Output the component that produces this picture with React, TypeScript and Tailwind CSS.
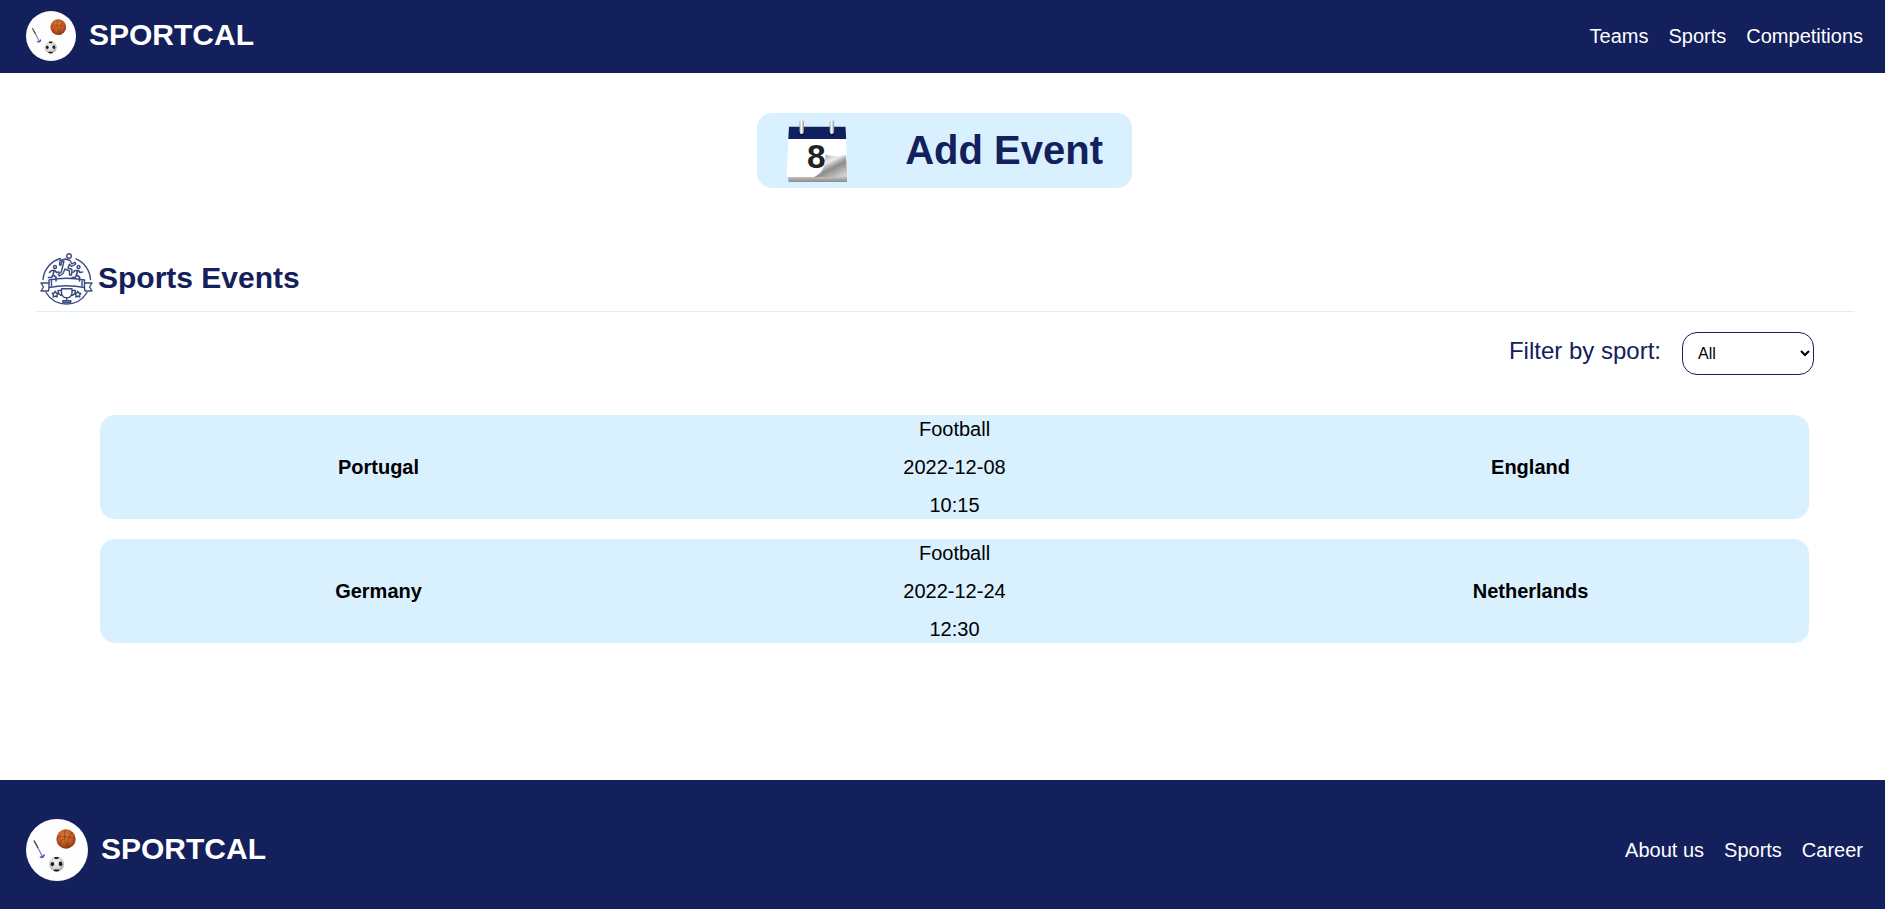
import React from "react";

function Logo({ className }: { className: string }) {
  return (
    <svg viewBox="0 0 62 62" className={className} aria-hidden="true">
      <defs>
        <radialGradient id="basketball" cx="0.45" cy="0.35" r="0.65">
          <stop offset="0" stopColor="#e07c3c" />
          <stop offset="0.6" stopColor="#c25a20" />
          <stop offset="1" stopColor="#8a3510" />
        </radialGradient>
        <radialGradient id="football" cx="0.45" cy="0.4" r="0.6">
          <stop offset="0" stopColor="#f4f4f4" />
          <stop offset="0.7" stopColor="#d4d4d6" />
          <stop offset="1" stopColor="#9a9a9c" />
        </radialGradient>
      </defs>
      <circle cx="31" cy="31" r="31" fill="#fefefe" />
      <circle cx="40" cy="20" r="9.7" fill="url(#basketball)" />
      <path d="M31 19q7 -4 18 1M39 10.500q-2 9 3 19M46 13q-5 6 -4 16M33 26q2 -6 7 -8" fill="none" stroke="#7c3213" strokeWidth="0.6" />
      <path d="M8 21.5L12 29" stroke="#3c3a48" strokeWidth="1.4" />
      <path d="M12 29L17 38.5" stroke="#8780c4" strokeWidth="1.4" />
      <path d="M14 37.5q2.500 2.500 4.500 -2" fill="none" stroke="#5547ae" strokeWidth="1.600" />
      <circle cx="30.500" cy="45" r="7.500" fill="url(#football)" />
      <path d="M28 38.200l5 -0.300l-1 2.200h-3zM25 43.500l2.500 -0.500l0.800 2.500l-1.800 2l-2 -1.500zM33 43l2.500 -0.500l1 3l-1.500 2l-2.200 -1.500zM28.500 50.500h4l1 1.600l-3 0.500l-3 -0.600z" fill="#1c1c1e" />
    </svg>
  );
}

function CalendarIcon() {
  return (
    <svg viewBox="0 0 62 64" className="h-16 w-[62px] shrink-0" aria-hidden="true">
      <defs>
        <linearGradient id="ring" x1="0" x2="1" y1="0" y2="0">
          <stop offset="0" stopColor="#a3a5aa" />
          <stop offset="0.45" stopColor="#ffffff" />
          <stop offset="1" stopColor="#8b8d92" />
        </linearGradient>
        <linearGradient id="curl" x1="0.25" x2="0.85" y1="0.15" y2="0.95">
          <stop offset="0" stopColor="#b5b5b5" />
          <stop offset="0.25" stopColor="#ededed" />
          <stop offset="0.42" stopColor="#b0b0b0" />
          <stop offset="0.55" stopColor="#8c8c8c" />
          <stop offset="1" stopColor="#d0d0d0" />
        </linearGradient>
        <linearGradient id="stack" x1="0" x2="0" y1="0" y2="1">
          <stop offset="0" stopColor="#c6c6c6" />
          <stop offset="0.6" stopColor="#a2a2a2" />
          <stop offset="1" stopColor="#8c8c8c" />
        </linearGradient>
      </defs>
      <path d="M2 57.500h59v5.500h-58.500z" fill="url(#stack)" />
      <path d="M2.500 19h57.500l1.500 39h-61z" fill="#fff" />
      <path d="M3 7.800h56.500l0.700 12.200h-57.900z" fill="#10205f" />
      <text x="30.300" y="49" textAnchor="middle" fontFamily="Liberation Sans, sans-serif" fontWeight="700" fontSize="33.500" fill="#222">8</text>
      <path d="M60 36l1.300 22h-33.300c7 -2.500 11.500 -9 11.500 -22.500c5 2.200 14 2.200 20.500 0.500z" fill="url(#curl)" />
      <ellipse cx="15.700" cy="14.200" rx="2.900" ry="2.400" fill="#081240" />
      <ellipse cx="45.900" cy="14.200" rx="2.900" ry="2.400" fill="#081240" />
      <rect x="13.500" y="1" width="4.400" height="14" rx="2.200" fill="url(#ring)" />
      <rect x="43.700" y="1" width="4.400" height="14" rx="2.200" fill="url(#ring)" />
    </svg>
  );
}

function Star({ x }: { x: number }) {
  return (
    <path
      transform={`translate(${x} 41.300)`}
      strokeWidth="1.500"
      d="M0 -3l1 1.600l2 0.500l-1.200 1.500l0.100 2l-1.900 -0.700l-1.900 0.700l0.100 -2l-1.200 -1.500l2 -0.500z"
    />
  );
}

function SmallRunner({ x }: { x: number }) {
  return (
    <g transform={`translate(${x} 12)`}>
      <circle cx="1" cy="2" r="1.500" />
      <path d="M-4.500 7.500l2 -2l3.500 0l1.500 2l2.500 -0.500M0 5.500l-1 4.500l3 2l0 4M-1 10l-1.500 2.500h-3" strokeWidth="1.600" />
    </g>
  );
}

function EventsIcon() {
  return (
    <svg
      viewBox="0 0 53 53"
      className="size-[53px] shrink-0"
      fill="none"
      stroke="#3a4980"
      strokeWidth="1.400"
      strokeLinejoin="round"
      strokeLinecap="round"
      aria-hidden="true"
    >
      <path d="M3 26.500A24 24 0 0 1 20.500 5.500M36 5.800A24 24 0 0 1 50.500 26.500M6 39.500A24 24 0 0 0 47 39.500" />
      <circle cx="29" cy="3" r="2.300" />
      <path d="M19.500 12l0.500 -4.500l5.500 -1.500l4.500 1.500l1.800 3.300l3.200 -1.500l0.800 1.700l-4.200 2.500l-2.300 -2.200l-1.300 3.700l4 1.500l-0.500 5.500h-2v-4l-4.500 -2l-2 4.500l-3.500 2.500l-1.200 -1.700l3 -2.300l1.900 -7.500l0.800 -3.300l-2.300 0.500l-0.700 3.300z" />
      <SmallRunner x={14} />
      <SmallRunner x={37.500} />
      <path d="M9 27q17.500 -3.500 35.500 0v7.500q-18 -3.500 -35.500 0z" />
      <path d="M9 30h-8l2.500 4l-2.500 4h7.500l0.500 -3M44.500 30h7.500l-2.500 4l2.500 4h-7l-0.500 -3M11.500 28v4.800M42 28v4.800" />
      <path d="M21.500 35.800h10.500v4c0 3 -2.500 5 -5.200 5s-5.300 -2 -5.300 -5zM21.500 37.500h-3.500q0 4.500 4.500 5M32 37.500h3.500q0 4.500 -4.500 5M26.700 45v2.500M22.800 47.600h8v1.600h-8z" />
      <Star x={15.2} />
      <Star x={37.800} />
    </svg>
  );
}

const events = [
  { home: "Portugal", sport: "Football", date: "2022-12-08", time: "10:15", away: "England" },
  { home: "Germany", sport: "Football", date: "2022-12-24", time: "12:30", away: "Netherlands" },
];

function NavLinks({ items }: { items: string[] }) {
  return (
    <nav className="flex gap-5 text-[20px] leading-[23px]">
      {items.map((item) => (
        <a key={item} href="#">{item}</a>
      ))}
    </nav>
  );
}

export default function App() {
  return (
    <div className="flex h-[909px] flex-col overflow-hidden bg-white font-['Liberation_Sans',Arial,sans-serif] text-black">
      <header className="flex h-[73px] shrink-0 items-center justify-between bg-[#13205b] pr-[22px] pl-[26px] text-white">
        <div className="flex items-center gap-[13px] pb-px">
          <Logo className="size-[50px]" />
          <span className="pb-[2px] text-[30px] leading-[34px] font-bold">SPORTCAL</span>
        </div>
        <NavLinks items={["Teams", "Sports", "Competitions"]} />
      </header>

      <main className="flex flex-1 flex-col">
        <button className="mt-10 ml-[757px] flex h-[75px] w-[375px] items-center justify-between rounded-[15px] bg-[#d9f0ff] pr-[29px] pl-[29px] text-[#13205b]">
          <CalendarIcon />
          <span className="pb-[2px] text-[40px] leading-[46px] font-bold">Add Event</span>
        </button>

        <div className="mt-[60px] mr-[31px] ml-[35px] flex h-16 items-center gap-[5px] border-b border-[#d9f0ff] pb-px pl-[5px] text-[#13205b]">
          <EventsIcon />
          <h2 className="pb-[2px] text-[30px] leading-[34px] font-bold">Sports Events</h2>
        </div>

        <div className="mt-5 mr-[71px] flex h-[43px] items-center justify-end gap-[21px]">
          <label htmlFor="sport" className="pb-1.5 text-[24px] leading-[27px] text-[#13205b]">Filter by sport:</label>
          <select id="sport" className="h-[43px] w-[132px] rounded-[15px] border border-[#13205b] bg-white px-[11px] text-[16px] text-black">
            <option>All</option>
            <option>Football</option>
          </select>
        </div>

        <div className="mt-10 mr-[76px] ml-[100px] flex flex-col gap-5">
          {events.map((event) => (
            <article key={event.home} className="grid h-[104px] grid-cols-[557px_1fr_557px] items-center rounded-[15px] bg-[#d9f0ff] text-center text-[20px] leading-[23px]">
              <strong>{event.home}</strong>
              <div className="flex flex-col gap-[15px]">
                <p>{event.sport}</p>
                <p>{event.date}</p>
                <p>{event.time}</p>
              </div>
              <strong>{event.away}</strong>
            </article>
          ))}
        </div>
      </main>

      <footer className="flex h-[129px] shrink-0 items-center justify-between bg-[#13205b] pt-[11px] pr-[22px] pl-[26px] text-white">
        <div className="flex items-center gap-[13px]">
          <Logo className="size-[62px]" />
          <span className="pb-[2px] text-[30px] leading-[34px] font-bold">SPORTCAL</span>
        </div>
        <NavLinks items={["About us", "Sports", "Career"]} />
      </footer>
    </div>
  );
}
